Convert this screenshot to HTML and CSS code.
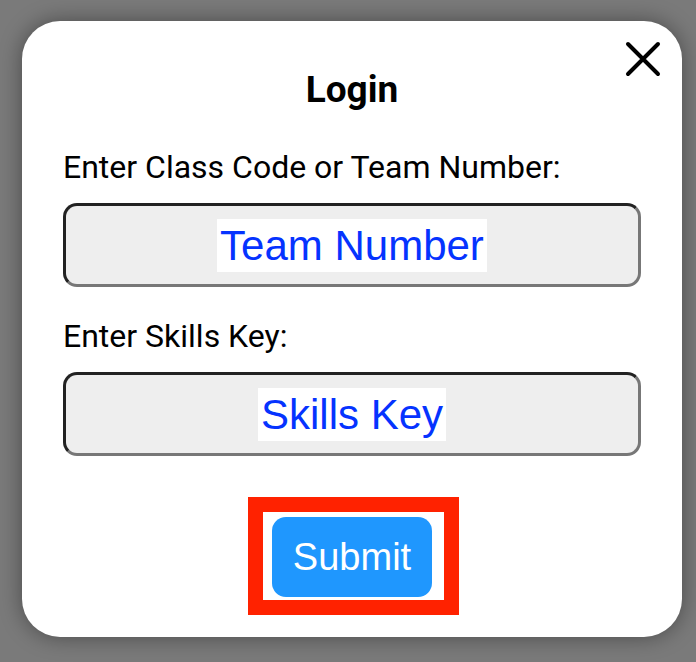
FILE: index.html
```html
<!DOCTYPE html>
<html lang="en">
<head>
    <meta charset="UTF-8">
    <meta name="viewport" content="width=device-width, initial-scale=1.0">
    <title>Login</title>
    <link rel="stylesheet" href="styles.css">
</head>
<body>
    <!-- LOGIN MODAL -->
    <div class="modal">
        <button class="close" aria-label="Close">
            <svg width="36" height="36" viewBox="0 0 36 36">
                <path d="M3 3 L33 33 M33 3 L3 33" stroke="#000" stroke-width="4" stroke-linecap="round"/>
            </svg>
        </button>

        <h2 class="title">Login</h2>

        <label class="label">Enter Class Code or Team Number:</label>
        <div class="field"><span>Team Number</span></div>

        <label class="label label-second">Enter Skills Key:</label>
        <div class="field"><span>Skills Key</span></div>

        <div class="submit-frame">
            <button class="submit">Submit</button>
        </div>
    </div>
</body>
</html>
```

FILE: styles.css
```css
/* Global Styles */
* {
    margin: 0;
    padding: 0;
    box-sizing: border-box;
}

body {
    width: 696px;
    height: 662px;
    background-color: #7a7a7a;
    padding: 21px 0 0 22px;
    font-family: Roboto, "Liberation Sans", sans-serif;
}

/* Modal box */
.modal {
    position: relative;
    width: 660px;
    height: 616px;
    background-color: white;
    border-radius: 38px;
    box-shadow: 0 0 22px rgba(0, 0, 0, 0.4);
    padding: 49px 41px 0 41px;
    display: flex;
    flex-direction: column;
}

.close {
    position: absolute;
    top: 20px;
    right: 21px;
    width: 36px;
    height: 36px;
    border: none;
    background: none;
    display: flex;
}

.title {
    font-size: 37px;
    font-weight: 700;
    line-height: 40px;
    text-align: center;
    color: #000;
}

.label {
    display: block;
    margin-top: 41px;
    font-size: 32px;
    line-height: 32px;
    color: #000;
}

.label-second {
    margin-top: 33px;
}

/* Input-like boxes */
.field {
    margin-top: 20px;
    height: 84px;
    background-color: #eeeeee;
    border: 3px solid;
    border-color: #222 #777 #777 #222;
    border-radius: 14px;
    display: flex;
    align-items: center;
    justify-content: center;
}

.field span {
    background-color: white;
    color: #0533ff;
    font-family: "Liberation Sans", Arial, sans-serif;
    font-size: 42px;
    line-height: 53px;
    padding: 0 3px;
}

/* Submit button */
.submit-frame {
    align-self: center;
    margin-top: 41px;
    margin-left: 3px;
    border: 15px solid #ff2200;
    padding: 5px 12px 3px 9px;
}

.submit {
    display: block;
    width: 160px;
    height: 80px;
    border: none;
    border-radius: 14px;
    background-color: #1f97fe;
    color: white;
    font-family: "Liberation Sans", Arial, sans-serif;
    font-size: 38px;
}
```
